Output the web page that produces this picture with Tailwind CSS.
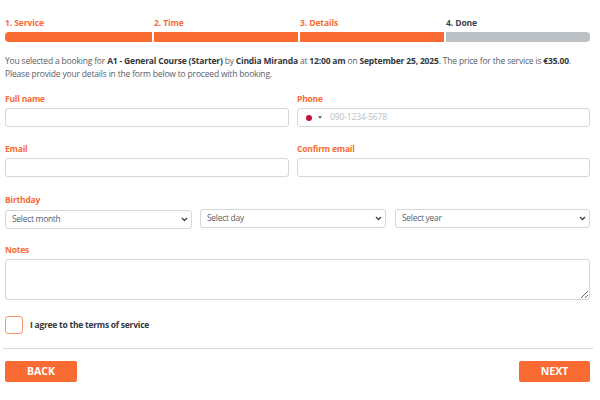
<!DOCTYPE html>
<html lang="en">
<head>
  <meta charset="UTF-8">
  <title>Booking details</title>
  <script src="https://cdn.jsdelivr.net/npm/@tailwindcss/browser@4"></script>
</head>
<body class="bg-white font-['Open_Sans',sans-serif] text-[#5b6168] overflow-hidden">
  <div class="w-[600px] h-[400px] pt-[17px]">
    <!-- Steps -->
    <div class="grid grid-cols-[147px_144px_144px_144px] gap-[2px] ml-[5px] w-[585px] text-[8.5px] tracking-[-0.1px] font-bold leading-[12px]">
      <div class="text-[#f96b33]">1. Service<div class="h-[10px] mt-[3px] bg-[#f96b33] rounded-l-[4px]"></div></div>
      <div class="text-[#f96b33]">2. Time<div class="h-[10px] mt-[3px] bg-[#f96b33]"></div></div>
      <div class="text-[#f96b33]">3. Details<div class="h-[10px] mt-[3px] bg-[#f96b33]"></div></div>
      <div class="text-[#3c4148]">4. Done<div class="h-[10px] mt-[3px] bg-[#bcc1c5] rounded-r-[4px]"></div></div>
    </div>

    <!-- Summary -->
    <p class="mt-[12px] ml-[5px] w-[590px] text-[8.5px] tracking-[-0.18px] leading-[13px] whitespace-nowrap">You selected a booking for <b class="text-[#33373d]">A1 - General Course (Starter)</b> by <b class="text-[#33373d]">Cindia Miranda</b> at <b class="text-[#33373d]">12:00 am</b> on <b class="text-[#33373d]">September 25, 2025</b>. The price for the service is <b class="text-[#33373d]">€35.00</b>.<br>Please provide your details in the form below to proceed with booking.</p>

    <!-- Name / phone -->
    <div class="grid grid-cols-[284px_293px] gap-x-[8px] ml-[5px] mt-[13px]">
      <div>
        <label class="block text-[8.5px] tracking-[-0.2px] font-bold leading-[12px] text-[#f96b33]">Full name</label>
        <input type="text" class="block w-full h-[19px] mt-[3px] border border-[#d4d6d8] rounded-[3px] bg-white">
      </div>
      <div>
        <label class="block text-[8.5px] tracking-[-0.2px] font-bold leading-[12px] text-[#f96b33]">Phone</label>
        <div class="flex items-center h-[19px] mt-[3px] border border-[#d4d6d8] rounded-[3px] bg-white pl-[8px] text-[8.5px] tracking-[-0.15px] text-[#bcc0c4]">
          <span class="w-[6px] h-[6px] rounded-full bg-[#c8103a]"></span>
          <span class="ml-[6px] w-0 h-0 border-x-[2px] border-x-transparent border-t-[3px] border-t-[#6b7075]"></span>
          <span class="ml-[8px]">090-1234-5678</span>
        </div>
      </div>
      <div class="mt-[16px]">
        <label class="block text-[8.5px] tracking-[-0.2px] font-bold leading-[12px] text-[#f96b33]">Email</label>
        <input type="text" class="block w-full h-[19px] mt-[3px] border border-[#d4d6d8] rounded-[3px] bg-white">
      </div>
      <div class="mt-[16px]">
        <label class="block text-[8.5px] tracking-[-0.2px] font-bold leading-[12px] text-[#f96b33]">Confirm email</label>
        <input type="text" class="block w-full h-[19px] mt-[3px] border border-[#d4d6d8] rounded-[3px] bg-white">
      </div>
    </div>

    <!-- Birthday -->
    <div class="ml-[5px] mt-[17px] w-[585px]">
      <label class="block text-[8.5px] tracking-[-0.2px] font-bold leading-[12px] text-[#f96b33]">Birthday</label>
      <div class="grid grid-cols-[187px_186px_196px] gap-x-[8px] mt-[3px] text-[8.5px] tracking-[-0.3px]">
        <div class="flex items-center justify-between h-[19px] mt-[1px] border border-[#d4d6d8] rounded-[3px] pl-[6px] pr-[3px]">Select month
          <svg width="7" height="5" viewBox="0 0 7 5" fill="none" stroke="#3c4148" stroke-width="1.3"><path d="M1 1l2.5 2.5L6 1"/></svg>
        </div>
        <div class="flex items-center justify-between h-[19px] border border-[#d4d6d8] rounded-[3px] pl-[6px] pr-[3px]">Select day
          <svg width="7" height="5" viewBox="0 0 7 5" fill="none" stroke="#3c4148" stroke-width="1.3"><path d="M1 1l2.5 2.5L6 1"/></svg>
        </div>
        <div class="flex items-center justify-between h-[19px] ml-[1px] border border-[#d4d6d8] rounded-[3px] pl-[6px] pr-[3px]">Select year
          <svg width="7" height="5" viewBox="0 0 7 5" fill="none" stroke="#3c4148" stroke-width="1.3"><path d="M1 1l2.5 2.5L6 1"/></svg>
        </div>
      </div>
    </div>

    <!-- Notes -->
    <div class="ml-[5px] mt-[15px] w-[585px]">
      <label class="block text-[8.5px] tracking-[-0.2px] font-bold leading-[12px] text-[#f96b33]">Notes</label>
      <textarea class="block w-full h-[41px] mt-[3px] border border-[#d4d6d8] rounded-[3px] bg-white"></textarea>
    </div>

    <!-- Terms -->
    <div class="flex items-center ml-[5px] mt-[16px]">
      <span class="w-[18px] h-[18px] border border-[#f9946c] rounded-[3px]"></span>
      <span class="ml-[7px] text-[8.5px] tracking-[-0.25px] font-bold text-[#33373d]">I agree to the terms of service</span>
    </div>

    <!-- Footer -->
    <div class="ml-[3px] w-[590px] mt-[14px] border-t border-[#d9dbdd] pt-[12px] pl-[2px] pr-[3px] flex justify-between">
      <button class="w-[72px] h-[21px] bg-[#f96b33] rounded-[2px] text-white text-[10.5px] font-bold">BACK</button>
      <button class="w-[71px] h-[21px] bg-[#f96b33] rounded-[2px] text-white text-[10.5px] font-bold">NEXT</button>
    </div>
  </div>
</body>
</html>
